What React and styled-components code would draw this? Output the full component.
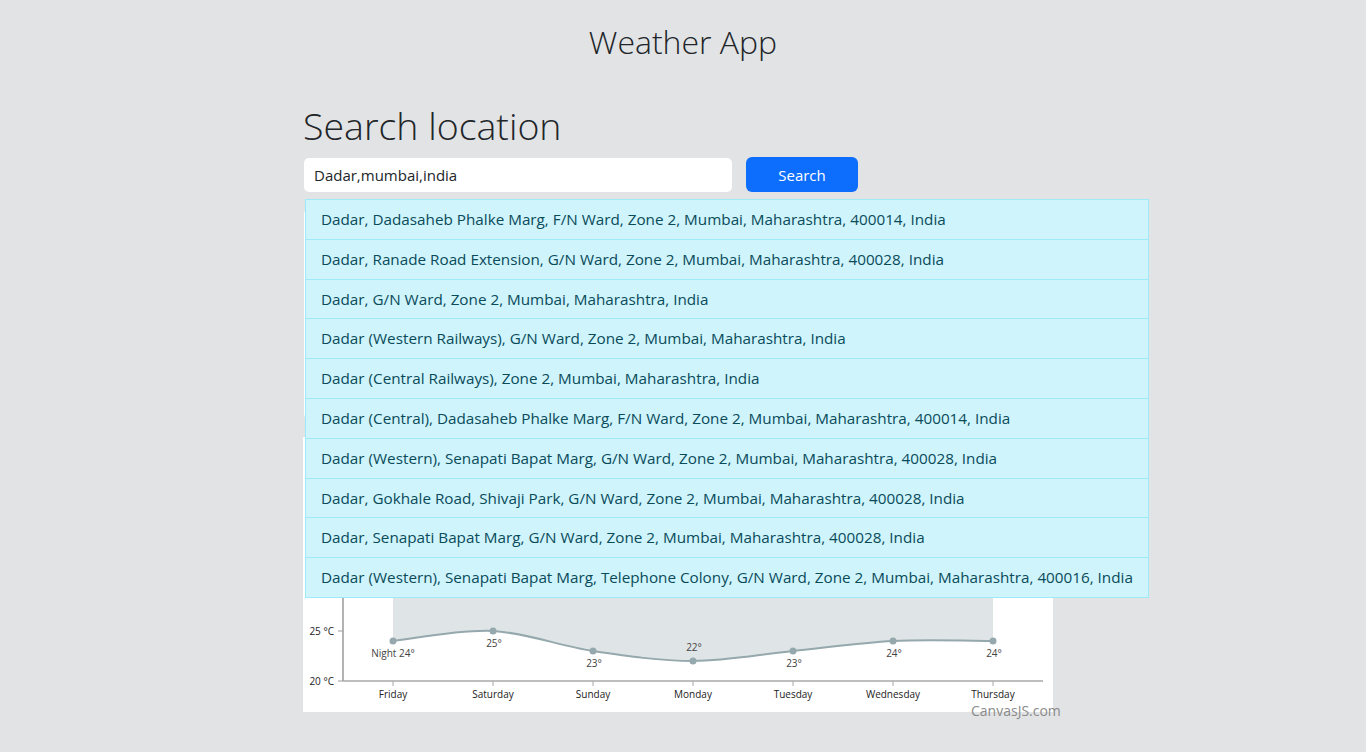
import React from "react";
import styled, { createGlobalStyle } from "styled-components";

const GlobalStyle = createGlobalStyle`
  html, body {
    margin: 0;
    padding: 0;
    background: #e2e3e5;
    font-family: "Open Sans", "Noto Sans", sans-serif;
    color: #212529;
  }
  * { box-sizing: border-box; }
`;

const suggestions = [
  "Dadar, Dadasaheb Phalke Marg, F/N Ward, Zone 2, Mumbai, Maharashtra, 400014, India",
  "Dadar, Ranade Road Extension, G/N Ward, Zone 2, Mumbai, Maharashtra, 400028, India",
  "Dadar, G/N Ward, Zone 2, Mumbai, Maharashtra, India",
  "Dadar (Western Railways), G/N Ward, Zone 2, Mumbai, Maharashtra, India",
  "Dadar (Central Railways), Zone 2, Mumbai, Maharashtra, India",
  "Dadar (Central), Dadasaheb Phalke Marg, F/N Ward, Zone 2, Mumbai, Maharashtra, 400014, India",
  "Dadar (Western), Senapati Bapat Marg, G/N Ward, Zone 2, Mumbai, Maharashtra, 400028, India",
  "Dadar, Gokhale Road, Shivaji Park, G/N Ward, Zone 2, Mumbai, Maharashtra, 400028, India",
  "Dadar, Senapati Bapat Marg, G/N Ward, Zone 2, Mumbai, Maharashtra, 400028, India",
  "Dadar (Western), Senapati Bapat Marg, Telephone Colony, G/N Ward, Zone 2, Mumbai, Maharashtra, 400016, India",
];

const forecast = [
  { day: "Friday", temp: 24, label: "Night 24°", above: false },
  { day: "Saturday", temp: 25, label: "25°", above: false },
  { day: "Sunday", temp: 23, label: "23°", above: false },
  { day: "Monday", temp: 22, label: "22°", above: true },
  { day: "Tuesday", temp: 23, label: "23°", above: false },
  { day: "Wednesday", temp: 24, label: "24°", above: false },
  { day: "Thursday", temp: 24, label: "24°", above: false },
];

// chart geometry (px inside the svg)
const AXIS_X = 40;
const AXIS_Y = 244;
const yFor = (t) => AXIS_Y - (t - 20) * 10;
const xFor = (i) => 90 + i * 100;

const splinePath = (pts) => {
  let d = `M${pts[0][0]},${pts[0][1]}`;
  for (let i = 0; i < pts.length - 1; i++) {
    const p0 = pts[i - 1] || pts[i];
    const p1 = pts[i];
    const p2 = pts[i + 1];
    const p3 = pts[i + 2] || p2;
    const c1 = [p1[0] + (p2[0] - p0[0]) / 6, p1[1] + (p2[1] - p0[1]) / 6];
    const c2 = [p2[0] - (p3[0] - p1[0]) / 6, p2[1] - (p3[1] - p1[1]) / 6];
    d += ` C${c1[0]},${c1[1]} ${c2[0]},${c2[1]} ${p2[0]},${p2[1]}`;
  }
  return d;
};

const TempChart = () => {
  const pts = forecast.map((f, i) => [xFor(i), yFor(f.temp)]);
  const line = splinePath(pts);
  const area = `${line} L${pts[pts.length - 1][0]},10 L${pts[0][0]},10 Z`;
  return (
    <ChartSvg width="750" height="275" viewBox="0 0 750 275">
      <path d={area} fill="#dfe5e6" />
      <path d={line} fill="none" stroke="#95a8ad" strokeWidth="2" />
      <line x1={AXIS_X} y1="0" x2={AXIS_X} y2={AXIS_Y} stroke="#9a9a9a" strokeWidth="1.5" />
      <line x1={AXIS_X} y1={AXIS_Y} x2="740" y2={AXIS_Y} stroke="#a8a8a8" strokeWidth="1.5" />
      {[20, 25].map((t) => (
        <g key={t}>
          <line x1={AXIS_X - 5} y1={yFor(t)} x2={AXIS_X} y2={yFor(t)} stroke="#9a9a9a" />
          <text x={AXIS_X - 9} y={yFor(t) + 3.5} textAnchor="end" className="axis">
            {t} °C
          </text>
        </g>
      ))}
      {forecast.map((f, i) => (
        <g key={f.day}>
          <line x1={xFor(i)} y1={AXIS_Y} x2={xFor(i)} y2={AXIS_Y + 5} stroke="#a8a8a8" />
          <text x={xFor(i)} y={AXIS_Y + 17} textAnchor="middle" className="axis">
            {f.day}
          </text>
          <circle cx={xFor(i)} cy={yFor(f.temp)} r="3.5" fill="#95a8ad" />
          <text
            x={xFor(i) + (i === 0 ? 0 : 1)}
            y={f.above ? yFor(f.temp) - 10 : yFor(f.temp) + 16}
            textAnchor="middle"
            className="label"
          >
            {f.label}
          </text>
        </g>
      ))}
      <text x="668" y="279" className="credit">CanvasJS.com</text>
    </ChartSvg>
  );
};

const App = () => {
  return (
    <>
      <GlobalStyle />
      <Page>
        <Title>Weather App</Title>
        <Main>
          <Heading>Search location</Heading>
          <SearchRow>
            <SearchInput defaultValue="Dadar,mumbai,india" />
            <SearchButton type="button">Search</SearchButton>
            <Suggestions>
              {suggestions.map((s) => (
                <SuggestionItem key={s}>{s}</SuggestionItem>
              ))}
            </Suggestions>
          </SearchRow>
          <InfoCard />
          <ChartCard>
            <TempChart />
          </ChartCard>
        </Main>
      </Page>
    </>
  );
};

export default App;

const Page = styled.div`
  min-height: 752px;
  padding-top: 20px;
  overflow: hidden;
`;

const Title = styled.h2`
  margin: 0;
  text-align: center;
  font-weight: 300;
  font-size: 32px;
  line-height: 44px;
  color: #212529;
`;

const Main = styled.main`
  width: 760px;
  margin: 0 auto;
  padding-top: 36px;
`;

const Heading = styled.h1`
  margin: 0 0 5px 0;
  font-weight: 300;
  font-size: 37.5px;
  line-height: 52px;
  color: #212529;
`;

const SearchRow = styled.div`
  position: relative;
  display: flex;
  align-items: center;
  gap: 14px;
  padding-left: 1px;
`;

const SearchInput = styled.input`
  width: 428px;
  height: 34px;
  padding: 0 10px;
  border: none;
  border-radius: 5px;
  background: #fff;
  font-family: inherit;
  font-size: 15px;
  color: #212529;
  outline: none;
`;

const SearchButton = styled.button`
  width: 112px;
  height: 35px;
  border: none;
  border-radius: 6px;
  background: #0d6efd;
  color: #fff;
  font-family: inherit;
  font-size: 15px;
  cursor: pointer;
`;

const Suggestions = styled.ul`
  position: absolute;
  top: 42px;
  left: 2px;
  width: 844px;
  margin: 0;
  padding: 0;
  list-style: none;
  z-index: 5;
`;

const SuggestionItem = styled.li`
  padding: 7px 15px;
  line-height: 24.8px;
  font-size: 15.25px;
  color: #0a4b5a;
  background: #cff4fc;
  border: 1px solid #9eeaf9;
  white-space: nowrap;

  & + & {
    margin-top: -1px;
  }
`;

const InfoCard = styled.section`
  width: 750px;
  height: 212px;
  margin: 16px 0 0 1px;
  background: #fff;
  border-radius: 6px;
`;

const ChartCard = styled.section`
  width: 750px;
  height: 275px;
  margin-top: 17px;
  background: #fff;
`;

const ChartSvg = styled.svg`
  display: block;
  overflow: visible;
  font-family: "Open Sans", sans-serif;

  .axis {
    font-size: 10px;
    fill: #222;
  }
  .label {
    font-size: 10px;
    fill: #444;
  }
  .credit {
    font-size: 14px;
    fill: #8a8a8a;
  }
`;
